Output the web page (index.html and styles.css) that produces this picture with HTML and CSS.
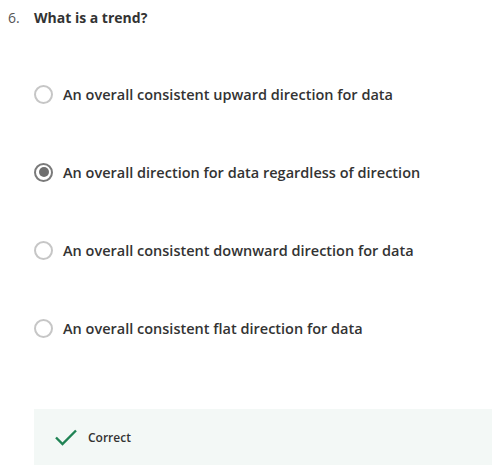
FILE: index.html
```html
<!DOCTYPE html>
<html>
<head>
<meta charset="utf-8">
<link rel="stylesheet" href="styles.css">
</head>
<body>
<div class="quiz">
  <div class="question">
    <span class="num">6.</span>
    <span class="qtext">What is a trend?</span>
  </div>
  <div class="options">
    <div class="option"><span class="radio"></span><span class="label">An overall consistent upward direction for data</span></div>
    <div class="option"><span class="radio checked"></span><span class="label">An overall direction for data regardless of direction</span></div>
    <div class="option"><span class="radio"></span><span class="label">An overall consistent downward direction for data</span></div>
    <div class="option"><span class="radio"></span><span class="label">An overall consistent flat direction for data</span></div>
  </div>
  <div class="feedback">
    <svg class="check" width="24" height="18" viewBox="0 0 24 18"><path d="M2 9.5 L8.5 16 L22 2.5" fill="none" stroke="#1f8354" stroke-width="2.4"/></svg>
    <span class="ftext">Correct</span>
  </div>
</div>
</body>
</html>
```
FILE: styles.css
```css
html, body { margin: 0; padding: 0; background: #fff; }
body { font-family: "Open Sans", "Liberation Sans", sans-serif; color: #1f1f1f; }
.quiz { padding: 7px 0 0 8px; }
.question { display: flex; align-items: center; height: 20px; font-size: 14px; }
.num { width: 26px; color: #555; font-weight: 400; }
.qtext { font-weight: 700; color: #333; }
.options { display: flex; flex-direction: column; gap: 54px; margin-top: 55px; padding-left: 26px; }
.option { display: flex; align-items: center; height: 24px; }
.radio { box-sizing: border-box; width: 19px; height: 19px; border-radius: 50%; border: 2px solid #c6c6c6; margin-right: 10px; display: flex; align-items: center; justify-content: center; }
.radio.checked { border-color: #7a7a7a; }
.radio.checked::after { content: ""; width: 10px; height: 10px; border-radius: 50%; background: #6e6e6e; }
.label { font-size: 14.5px; font-weight: 600; color: #333; }
.feedback { margin: 69px 0 0 26px; height: 56px; background: #f3f8f6; display: flex; align-items: center; padding-left: 20px; }
.check { margin-right: 10px; }
.ftext { font-size: 12px; font-weight: 600; color: #333; }
```
